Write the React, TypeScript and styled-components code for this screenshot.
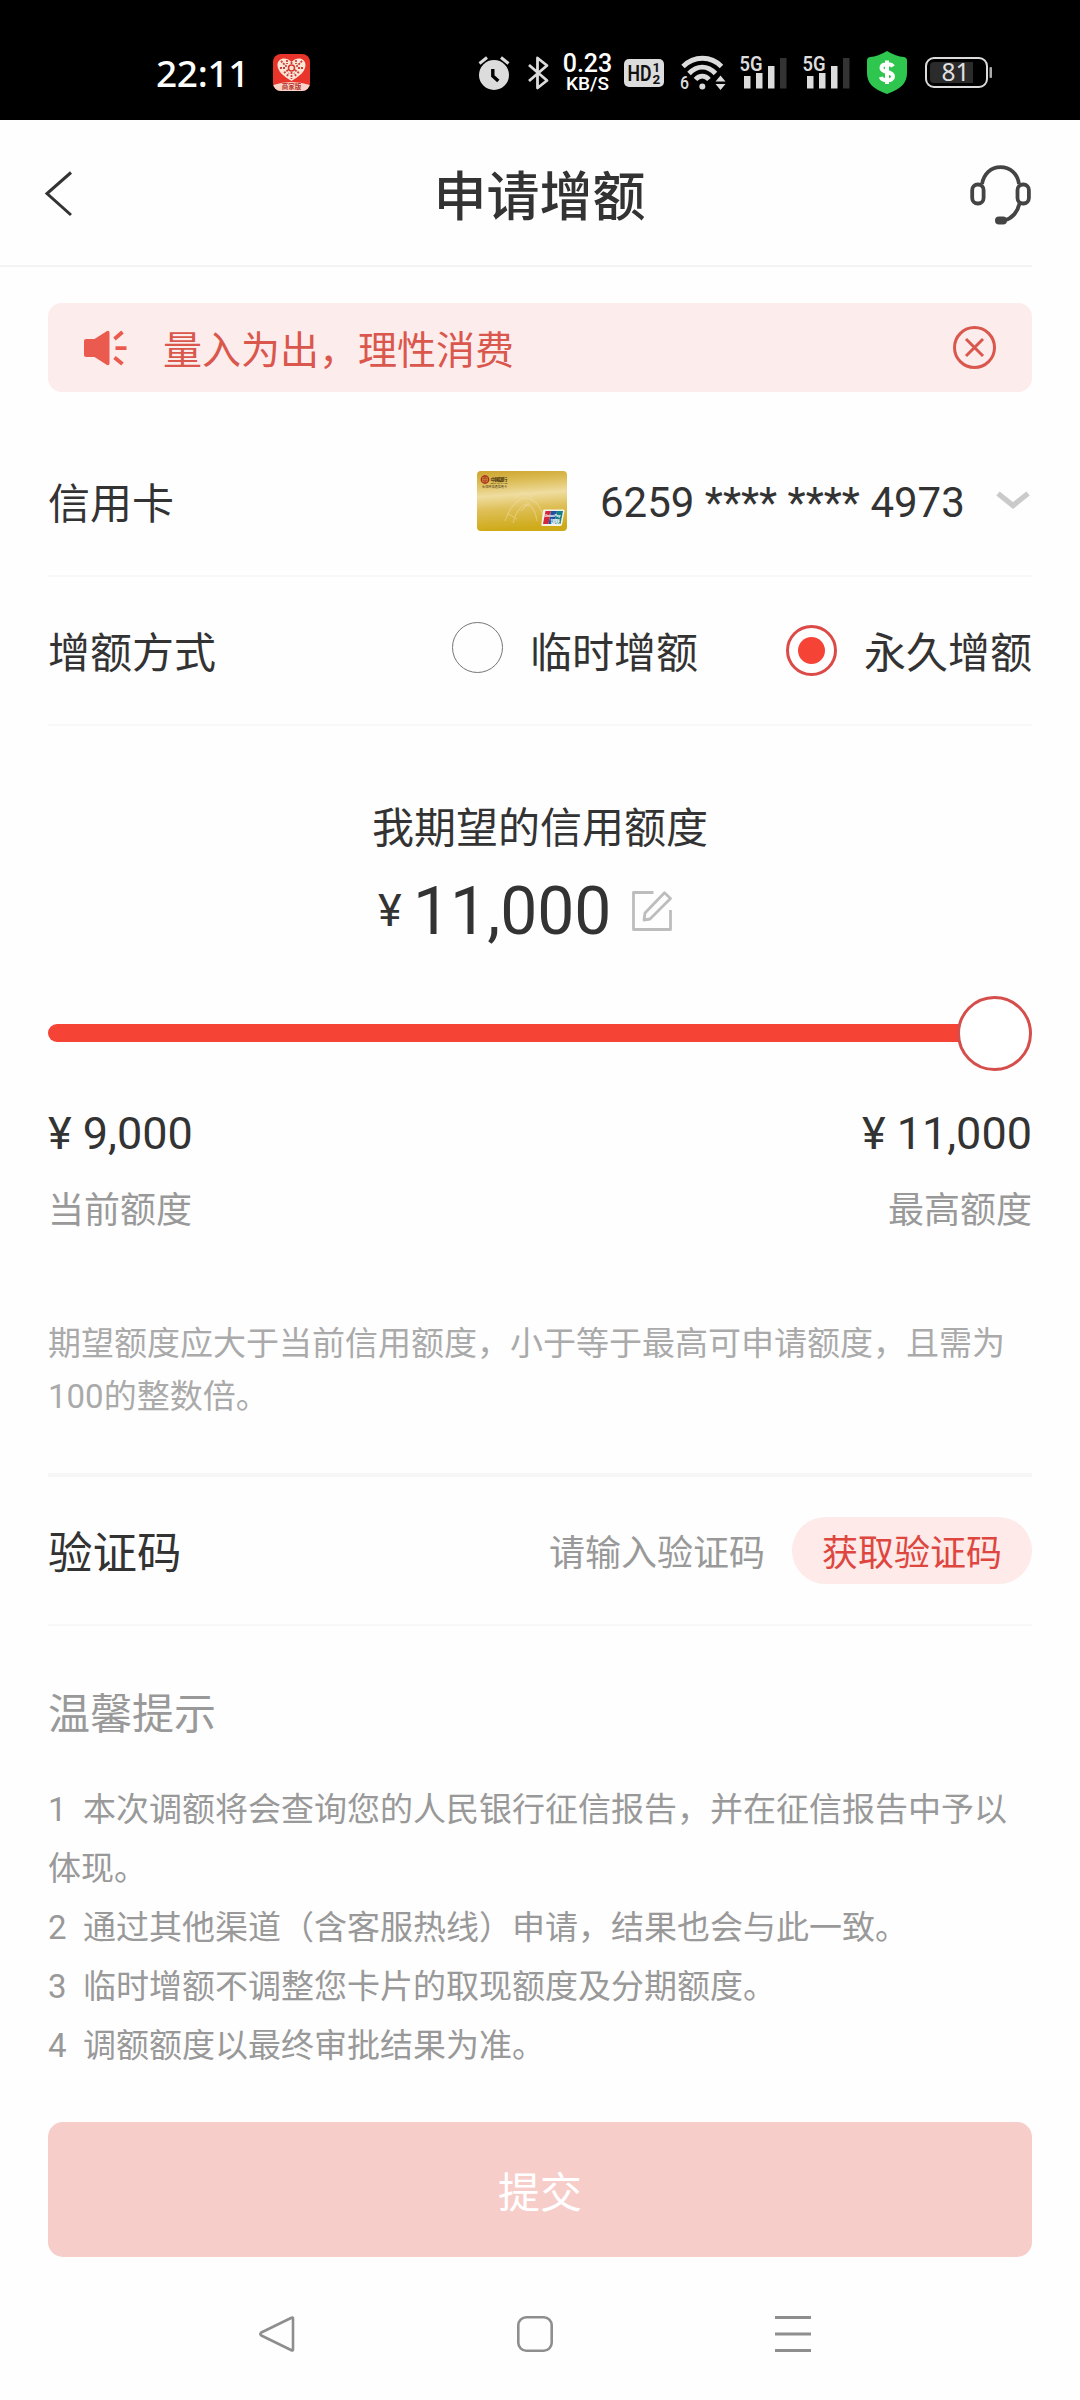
import React, { useState } from 'react';
import styled, { createGlobalStyle, css } from 'styled-components';

const GlobalStyle = createGlobalStyle`
  * { box-sizing: border-box; }
  body { margin: 0; background: #fefefe; }
  button, input { font: inherit; border: 0; padding: 0; margin: 0; background: none; }
  svg { display: block; overflow: visible; }
`;

const Screen = styled.div`
  width: 1080px;
  height: 2400px;
  display: flex;
  flex-direction: column;
  overflow: hidden;
  background: #fefefe;
  color: #333;
  font-family: Roboto, 'Noto Sans CJK SC', sans-serif;
`;

/* ---------- status bar ---------- */

const StatusBar = styled.header`
  height: 120px;
  flex: none;
  display: flex;
  align-items: center;
  justify-content: space-between;
  padding: 25px 88px 0 156px;
  background: #000;
  color: #fff;
`;

const StatusGroup = styled.div`
  display: flex;
  align-items: center;
  gap: 24px;
`;

const Clock = styled.span`
  width: 93px;
  font: 500 37px/40px 'Noto Sans', sans-serif;
  letter-spacing: -0.3px;
  white-space: nowrap;
`;

const StatusIcons = styled.div`
  display: grid;
  grid-template-columns: 50px 35px 61px 56px 60px 63px 64px 58px 67px;
  align-items: center;
`;

const NetSpeed = styled.div`
  width: 49px;
  display: flex;
  flex-direction: column;
  align-items: center;
  white-space: nowrap;
`;

const SpeedValue = styled.span`
  font: 500 25px/22px Roboto, sans-serif;
`;

const SpeedUnit = styled.span`
  font: 500 19px/17px Roboto, sans-serif;
`;

/* ---------- page header ---------- */

const TitleBar = styled.div`
  width: 1032px;
  height: 147px;
  flex: none;
  display: grid;
  grid-template-columns: 100px 1fr 62px;
  align-items: center;
  padding-left: 42px;
  border-bottom: 2px solid #f3f3f3;
`;

const PageTitle = styled.h1`
  margin: 11px 0 0 23px;
  padding-right: 56px;
  text-align: center;
  font-size: 53px;
  font-weight: 500;
  line-height: 64px;
`;

const IconButton = styled.button<{ $drop?: number }>`
  display: flex;
  padding-top: ${(p) => p.$drop ?? 0}px;
  color: inherit;
`;

const Main = styled.main`
  flex: none;
  display: flex;
  flex-direction: column;
  padding: 36px 48px 0;
`;

const Notice = styled.div`
  height: 89px;
  display: flex;
  align-items: center;
  padding: 0 35px;
  border-radius: 14px;
  background: #fdecec;
  color: #d9574c;
`;

const NoticeText = styled.span`
  flex: 1;
  margin-left: 35px;
  padding-top: 6px;
  font-size: 39px;
  line-height: 50px;
`;

/* ---------- form rows ---------- */

const Row = styled.div<{ $height: number; $top?: number }>`
  height: ${(p) => p.$height}px;
  margin-top: ${(p) => p.$top ?? 0}px;
  display: flex;
  align-items: center;
  justify-content: space-between;
  border-bottom: 2px solid #f8f8f8;
`;

const Label = styled.span<{ $size?: number }>`
  padding-top: 6px;
  font-size: ${(p) => p.$size ?? 42}px;
  line-height: 60px;
`;

const CardPicker = styled.div`
  display: flex;
  align-items: center;
  padding: 0 2px 2px 0;
`;

const CardNumber = styled.span`
  width: 365px;
  margin: 0 31px 0 33px;
  padding-top: 4px;
  font-size: 42px;
  line-height: 50px;
  white-space: nowrap;
`;

const RadioGroup = styled.div`
  display: flex;
  gap: 88px;
`;

const RadioOption = styled.label`
  display: flex;
  align-items: center;
  gap: 27px;
`;

const RadioMark = styled.span<{ $checked: boolean }>`
  width: 51px;
  height: 51px;
  display: flex;
  align-items: center;
  justify-content: center;
  border-radius: 50%;
  ${(p) =>
    p.$checked
      ? css`
          border: 3px solid #dc4a48;
          &::after {
            content: '';
            width: 27px;
            height: 27px;
            border-radius: 50%;
            background: #f54336;
          }
        `
      : css`
          border: 1.5px solid #757575;
          margin-bottom: 6px;
        `}
`;

/* ---------- limit section ---------- */

const LimitTitle = styled.h2`
  margin: 71px 0 0;
  padding-top: 2px;
  text-align: center;
  font-size: 42px;
  font-weight: 400;
  line-height: 60px;
`;

const Amount = styled.div`
  height: 70px;
  margin: 17px 0 0 330px;
  display: flex;
  align-items: center;
`;

const Yen = styled.span`
  width: 35px;
  font-size: 45px;
  line-height: 50px;
`;

const AmountValue = styled.span`
  width: 219px;
  padding-top: 2px;
  font-size: 66px;
  line-height: 70px;
`;

const Slider = styled.div`
  height: 75px;
  margin-top: 50px;
  display: flex;
  align-items: center;
`;

const Track = styled.div`
  flex: 1;
  height: 18px;
  margin: 0 -2px 1px 0;
  border-radius: 9px 0 0 9px;
  background: #f54336;
`;

const Knob = styled.div`
  width: 75px;
  height: 75px;
  border: 3px solid #d54e4b;
  border-radius: 50%;
  background: #fff;
`;

const Bounds = styled.div`
  margin-top: 38px;
  display: flex;
  justify-content: space-between;
`;

const Bound = styled.div<{ $end?: boolean }>`
  display: flex;
  flex-direction: column;
  align-items: ${(p) => (p.$end ? 'flex-end' : 'flex-start')};
  gap: 25px;
`;

const BoundValue = styled.span`
  font-size: 45px;
  line-height: 50px;
`;

const BoundCaption = styled.span`
  padding-top: 2px;
  color: #999;
  font-size: 36px;
  line-height: 50px;
`;

const Hint = styled.p`
  margin: 81px 0 50px;
  color: #aaa;
  font-size: 33px;
  line-height: 53px;
`;

const Divider = styled.hr`
  width: 100%;
  height: 4px;
  margin: 0;
  border: 0;
  background: #f6f6f6;
`;

/* ---------- verification ---------- */

const CodeEntry = styled.div`
  display: flex;
  align-items: center;
`;

const CodeInput = styled.input`
  width: 243px;
  height: 50px;
  margin-top: 6px;
  font-size: 36px;
  outline: 0;
  &::placeholder { color: #999; opacity: 1; }
`;

const CodeButton = styled.button`
  width: 240px;
  height: 67px;
  padding-top: 6px;
  border-radius: 34px;
  background: #fdeae9;
  color: #dd4740;
  font-size: 36px;
  line-height: 60px;
`;

const TipsTitle = styled.h3`
  margin: 57px 0 35px;
  padding-top: 2px;
  color: #999;
  font-size: 42px;
  font-weight: 400;
  line-height: 60px;
`;

const Tips = styled.div`
  color: #999;
  font-size: 33px;
  line-height: 59px;
`;

const Tip = styled.p`
  margin: 0;
  white-space: pre-wrap;
`;

const Submit = styled.button`
  height: 135px;
  margin-top: 47px;
  border-radius: 15px;
  background: #f7cdca;
  color: #fff;
  font-size: 42px;
`;

const NavBar = styled.nav`
  flex: 1;
  display: flex;
  justify-content: center;
  align-items: center;
  gap: 222px;
  padding: 11px 10px 0 0;
  color: #8e8e8e;
`;

/* ---------- drawings ---------- */

const AppBadge = () => (
  <svg width="37" height="37" viewBox="0 0 37 37">
    <defs>
      <clipPath id="badge"><rect width="37" height="37" rx="8" /></clipPath>
    </defs>
    <g clipPath="url(#badge)">
      <rect width="37" height="37" fill="#e8342b" />
      <path d="M18.500 27C10 22 4.500 17 4.500 11C4.500 4 13 2 18.500 8C24 2 32.500 4 32.500 11C32.500 17 27 22 18.500 27Z" fill="#fbe6d6" />
      <path d="M8 7l6 6M29 7l-6 6M7 14h5M25 14h5M11 19l4-3M26 19l-4-3M18.500 8v3M14 6v4M23 6v4M18.500 18v7M14 22l2-3M23 22l-2-3" stroke="#c9413a" strokeWidth="1.800" strokeDasharray="2 1" />
      <circle cx="18.500" cy="14" r="3" fill="none" stroke="#d8352c" strokeWidth="1.500" />
      <path d="M0 31Q18.500 25 37 31V37H0Z" fill="#fbd3c8" />
    </g>
    <text x="18.500" y="35" textAnchor="middle" fontSize="6.500" fontWeight="700" fill="#b3332b" fontFamily="Noto Sans CJK SC, sans-serif">商家版</text>
  </svg>
);

const AlarmIcon = () => (
  <svg width="32" height="34" viewBox="0 0 32 34">
    <circle cx="16" cy="19" r="15" fill="#dcdcdc" />
    <path d="M1.500 7.500L9 1.500M23 1.500L30.500 7.500" stroke="#dcdcdc" strokeWidth="3" />
    <path d="M14.800 13v7l5.500 5" fill="none" stroke="#000" strokeWidth="3.400" />
  </svg>
);

const BluetoothIcon = () => (
  <svg width="21" height="34" viewBox="0 0 21 34" fill="none" stroke="#dcdcdc" strokeWidth="2.800" strokeLinejoin="round">
    <path d="M1 9L19 24.500L9.500 32V2L19 9.500L1 25" />
  </svg>
);

const HdIcon = () => (
  <svg width="40" height="28" viewBox="0 0 40 28" fontFamily="Roboto, sans-serif" fontWeight="700">
    <rect width="40" height="28" rx="5" fill="#dcdcdc" />
    <text x="3.500" y="21.700" fontSize="21.500" fontWeight="600" textLength="24" lengthAdjust="spacingAndGlyphs" fill="#111">HD</text>
    <text x="28.500" y="12.800" fontSize="13.500" fill="#111">1</text>
    <text x="28.500" y="24.700" fontSize="13.500" fill="#111">2</text>
  </svg>
);

const WifiIcon = () => (
  <svg width="46" height="35" viewBox="0 0 46 35" fill="none" stroke="#dcdcdc" strokeWidth="4.800">
    <path d="M3 11.500C14 0.500 31 0.500 41.500 11.500" />
    <path d="M9 18.500C17 10 27.500 10 35.500 18.500" />
    <path d="M15.500 24.500C19.500 20 25 20 29 24.500" />
    <circle cx="22.300" cy="31.500" r="3" fill="#dcdcdc" stroke="none" />
    <path d="M35.500 26.500L40.500 20.500L45.500 26.500ZM35.500 29L40.500 35L45.500 29Z" fill="#dcdcdc" stroke="none" />
    <text x="0" y="34" fontSize="17.500" fontFamily="Roboto, sans-serif" fontWeight="500" textLength="9" lengthAdjust="spacingAndGlyphs" fill="#dcdcdc" stroke="none">6</text>
  </svg>
);

const SignalIcon = () => (
  <svg width="47" height="33" viewBox="0 0 47 33" fill="#dcdcdc">
    <text x="-0.500" y="15" fontSize="20.500" fontFamily="Roboto, sans-serif" fontWeight="600" textLength="23" lengthAdjust="spacingAndGlyphs">5G</text>
    <rect x="4" y="20" width="6.500" height="12.500" />
    <rect x="16" y="17" width="6.500" height="15.500" />
    <rect x="28" y="10" width="6.500" height="22.500" />
    <rect x="40" y="2" width="6.500" height="30.500" fill="#333" />
  </svg>
);

const ShieldIcon = () => (
  <svg width="40" height="43" viewBox="0 0 40 43">
    <path d="M20 0Q29 5.500 37 6Q40 6.500 40 9.500V22C40 32 34 38 20 43C6 38 0 32 0 22V9.500Q0 6.500 3 6Q11 5.500 20 0Z" fill="#2fc650" />
    <path d="M26 15.500C24.500 12.500 14.500 12 14.500 17C14.500 22.500 26 19.500 26 25.500C26 31 15 30 13.800 26M20 9.500V33" fill="none" stroke="#fff" strokeWidth="4" />
  </svg>
);

const BatteryIcon = () => (
  <svg width="67" height="31" viewBox="0 0 67 31">
    <rect x="1" y="1" width="61" height="29" rx="8" fill="none" stroke="#dcdcdc" strokeWidth="2" />
    <path d="M9 5H48V26H9Q5 26 5 22V9Q5 5 9 5Z" fill="#2b2b2b" />
    <rect x="64.500" y="10" width="2.500" height="11" rx="1" fill="#aaa" />
    <text x="30.500" y="24" textAnchor="middle" fontSize="24.500" fontFamily="Noto Sans, sans-serif" fill="#e0e0e0">81</text>
  </svg>
);

const BackIcon = () => (
  <svg width="32" height="46" viewBox="0 0 32 46" fill="none" stroke="#333" strokeWidth="3">
    <path d="M29 1.500L5 22.500L29 44" />
  </svg>
);

const HeadsetIcon = () => (
  <svg width="62" height="60" viewBox="0 0 62 60" fill="none" stroke="#444" strokeWidth="3.800">
    <rect x="2.200" y="19.500" width="11.400" height="19" rx="5.500" />
    <rect x="47.500" y="19.500" width="11.400" height="19" rx="5.500" />
    <path d="M12 19C14 8.500 21 2.200 30.500 2.200C40 2.200 47.500 8.500 49 19M49.500 38.500C47.500 47 42 53.500 34 55.500" />
    <rect x="25" y="51.500" width="12" height="8" rx="4" fill="#444" stroke="none" />
  </svg>
);

const SpeakerIcon = () => (
  <svg width="45" height="36" viewBox="0 0 45 36" fill="#ea5a4e">
    <path d="M1 11Q1 9 3 9H11.500L24 1Q26.500 0 26.500 3V33Q26.500 36 24 35L11.500 27H3Q1 27 1 25Z" />
    <path d="M31.500 9L39.500 2M31.500 27.500L39.500 34M32.500 18.200H43.500" stroke="#ea5a4e" strokeWidth="3.800" />
  </svg>
);

const CloseIcon = () => (
  <svg width="44" height="44" viewBox="0 0 44 44" fill="none" stroke="#d9574c" strokeWidth="3">
    <circle cx="21.500" cy="21.500" r="20" />
    <path d="M13 13L30 30M30 13L13 30" />
  </svg>
);

const CreditCardArt = () => (
  <svg width="90" height="60" viewBox="0 0 90 60">
    <defs>
      <linearGradient id="gold" x1="0" y1="0" x2="0.100" y2="1">
        <stop offset="0" stopColor="#cda52f" />
        <stop offset="0.200" stopColor="#dcbc55" />
        <stop offset="0.430" stopColor="#efdda0" />
        <stop offset="0.650" stopColor="#dfc05a" />
        <stop offset="1" stopColor="#ceaa18" />
      </linearGradient>
    </defs>
    <rect width="90" height="60" rx="4" fill="url(#gold)" />
    <path d="M28 50Q34 32 46 27Q60 26 66 44M36 52Q40 36 50 33Q58 36 60 50M38 27L46 20L54 26L60 22M44 40l8-8M30 42l10 6" fill="none" stroke="#f3e4ac" strokeWidth="1.200" opacity="0.400" />
    <circle cx="8" cy="8.500" r="3.700" fill="none" stroke="#a92a1c" strokeWidth="1.300" />
    <path d="M8 4v9M6 7h4v3H6z" fill="none" stroke="#a92a1c" strokeWidth="0.900" />
    <text x="13.500" y="9.700" fontSize="5" fontWeight="700" textLength="17" fill="#4a3510" fontFamily="Noto Sans CJK SC, sans-serif">中国银行</text>
    <text x="13.500" y="12.700" fontSize="2.200" textLength="17" fill="#4a3510">BANK OF CHINA</text>
    <text x="5" y="16.800" fontSize="3" textLength="25" fill="#4a3510" fontFamily="Noto Sans CJK SC, sans-serif">长城环球通信用卡</text>
    <path d="M67 38.500H86.500Q88 38.500 87.500 40L85 53.500Q84.700 55 83 55H65.500Q64 55 64.300 53.500L66 40Q66 38.500 67 38.500Z" fill="#f4f3ea" />
    <path d="M68.500 40H74L71.500 53H66Z" fill="#d3283c" />
    <path d="M74 40H80L77.500 53H71.500Z" fill="#20549a" />
    <path d="M80 40H86L83.500 53H77.500Z" fill="#13808a" />
    <text x="67.500" y="46" fontSize="4" fontStyle="italic" fontWeight="700" textLength="16" fill="#fff">UnionPay</text>
    <text x="73.500" y="51.700" fontSize="5" fontWeight="700" textLength="9.500" fill="#fff" fontFamily="Noto Sans CJK SC, sans-serif">银联</text>
  </svg>
);

const ChevronIcon = () => (
  <svg width="34" height="18" viewBox="0 0 34 18" fill="none" stroke="#cacaca" strokeWidth="5.400">
    <path d="M2 1.500L17 13.500L32 1.500" />
  </svg>
);

const EditIcon = () => (
  <svg width="40" height="40" viewBox="0 0 40 40" fill="none" stroke="#bdbdbd" strokeWidth="2.800" strokeLinejoin="round">
    <path d="M21.500 1.500H1.500V38.500H38.500V19" />
    <path d="M32.500 1.800L38.500 7.500L18 28L12 29L13 22Z" />
  </svg>
);

const NavBack = () => (
  <svg width="36" height="36" viewBox="0 0 36 36" fill="none" stroke="currentColor" strokeWidth="2.600" strokeLinejoin="round">
    <path d="M34 2.500V33.500Q34 35 32 34L2.300 19.500Q0.300 18 2.300 16.500L32 2Q34 1 34 2.500Z" />
  </svg>
);

const NavHome = () => (
  <svg width="36" height="36" viewBox="0 0 36 36" fill="none" stroke="currentColor" strokeWidth="2.600">
    <rect x="1.300" y="1.300" width="33.400" height="33.400" rx="8" />
  </svg>
);

const NavMenu = () => (
  <svg width="36" height="36" viewBox="0 0 36 36" stroke="currentColor" strokeWidth="3">
    <path d="M0 1.500H36M0 18H36M0 34.500H36" />
  </svg>
);

const methods = ['临时增额', '永久增额'];

const tips = [
  '本次调额将会查询您的人民银行征信报告，并在征信报告中予以体现。',
  '通过其他渠道（含客服热线）申请，结果也会与此一致。',
  '临时增额不调整您卡片的取现额度及分期额度。',
  '调额额度以最终审批结果为准。',
];

export default function App() {
  const [method, setMethod] = useState(methods[1]);

  return (
    <Screen>
      <GlobalStyle />
      <StatusBar>
        <StatusGroup>
          <Clock>22:11</Clock>
          <AppBadge />
        </StatusGroup>
        <StatusIcons>
          <AlarmIcon />
          <BluetoothIcon />
          <NetSpeed>
            <SpeedValue>0.23</SpeedValue>
            <SpeedUnit>KB/S</SpeedUnit>
          </NetSpeed>
          <HdIcon />
          <WifiIcon />
          <SignalIcon />
          <SignalIcon />
          <ShieldIcon />
          <BatteryIcon />
        </StatusIcons>
      </StatusBar>

      <TitleBar>
        <IconButton $drop={2} aria-label="返回"><BackIcon /></IconButton>
        <PageTitle>申请增额</PageTitle>
        <IconButton $drop={4} aria-label="客服"><HeadsetIcon /></IconButton>
      </TitleBar>

      <Main>
        <Notice>
          <SpeakerIcon />
          <NoticeText>量入为出，理性消费</NoticeText>
          <IconButton aria-label="关闭"><CloseIcon /></IconButton>
        </Notice>

        <Row $height={148} $top={37}>
          <Label>信用卡</Label>
          <CardPicker>
            <CreditCardArt />
            <CardNumber>6259 **** **** 4973</CardNumber>
            <ChevronIcon />
          </CardPicker>
        </Row>

        <Row $height={149}>
          <Label>增额方式</Label>
          <RadioGroup>
            {methods.map((name) => (
              <RadioOption key={name} onClick={() => setMethod(name)}>
                <RadioMark $checked={name === method} />
                <Label>{name}</Label>
              </RadioOption>
            ))}
          </RadioGroup>
        </Row>

        <LimitTitle>我期望的信用额度</LimitTitle>
        <Amount>
          <Yen>¥</Yen>
          <AmountValue>11,000</AmountValue>
          <EditIcon />
        </Amount>

        <Slider>
          <Track />
          <Knob />
        </Slider>
        <Bounds>
          <Bound>
            <BoundValue>¥ 9,000</BoundValue>
            <BoundCaption>当前额度</BoundCaption>
          </Bound>
          <Bound $end>
            <BoundValue>¥ 11,000</BoundValue>
            <BoundCaption>最高额度</BoundCaption>
          </Bound>
        </Bounds>
        <Hint>期望额度应大于当前信用额度，小于等于最高可申请额度，且需为100的整数倍。</Hint>

        <Divider />
        <Row $height={149}>
          <Label $size={44.5}>验证码</Label>
          <CodeEntry>
            <CodeInput placeholder="请输入验证码" />
            <CodeButton>获取验证码</CodeButton>
          </CodeEntry>
        </Row>

        <TipsTitle>温馨提示</TipsTitle>
        <Tips>
          {tips.map((tip, i) => (
            <Tip key={tip}>{`${i + 1}  ${tip}`}</Tip>
          ))}
        </Tips>
        <Submit>提交</Submit>
      </Main>

      <NavBar>
        <NavBack />
        <NavHome />
        <NavMenu />
      </NavBar>
    </Screen>
  );
}
